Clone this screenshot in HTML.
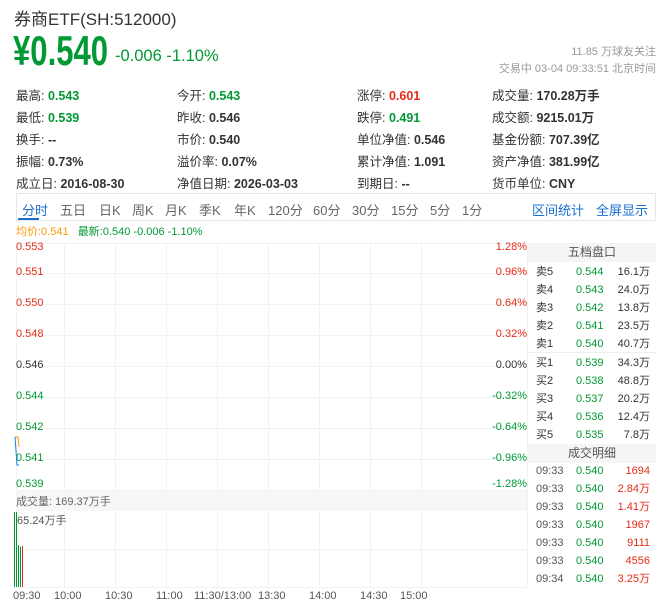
<!DOCTYPE html>
<html><head><meta charset="utf-8"><style>
*{margin:0;padding:0;box-sizing:border-box}
body{width:656px;height:615px;background:#fff;font-family:"Liberation Sans","Noto Sans CJK SC",sans-serif;color:#333;position:relative;overflow:hidden}
.a{position:absolute;white-space:nowrap}
.st{font-size:12.5px;color:#333}
.st b{font-weight:bold}
.tab{font-size:13px;color:#666;top:200px}
.ch{font-size:11px}
.hl{position:absolute;left:16px;width:511px;height:1px;background:#f2f2f2}
.vl{position:absolute;top:243px;width:1px;height:344px;background:#f2f2f2}
.pr{font-size:11px;color:#333}
.g{color:#093}.r{color:#e62c17}.o{color:#f90}
</style></head><body>
<div class="a" style="left:14px;top:5px;font-size:17px;color:#333">券商ETF(SH:512000)</div>
<div class="a g" style="left:13px;top:27px;font-size:42px;font-weight:bold;transform:scaleX(0.74);transform-origin:left top;line-height:1.15">¥0.540</div>
<div class="a g" style="left:115px;top:47px;font-size:16.5px">-0.006 -1.10%</div>
<div class="a" style="right:0;top:43px;font-size:11px;color:#999">11.85 万球友关注</div>
<div class="a" style="right:0;top:60px;font-size:11px;color:#999">交易中 03-04 09:33:51 北京时间</div>

<div class="a st" style="left:16px;top:85px">最高: <b class="g">0.543</b></div>
<div class="a st" style="left:177px;top:85px">今开: <b class="g">0.543</b></div>
<div class="a st" style="left:357px;top:85px">涨停: <b class="r">0.601</b></div>
<div class="a st" style="left:492px;top:85px">成交量: <b>170.28万手</b></div>
<div class="a st" style="left:16px;top:107px">最低: <b class="g">0.539</b></div>
<div class="a st" style="left:177px;top:107px">昨收: <b>0.546</b></div>
<div class="a st" style="left:357px;top:107px">跌停: <b class="g">0.491</b></div>
<div class="a st" style="left:492px;top:107px">成交额: <b>9215.01万</b></div>
<div class="a st" style="left:16px;top:129px">换手: <b>--</b></div>
<div class="a st" style="left:177px;top:129px">市价: <b>0.540</b></div>
<div class="a st" style="left:357px;top:129px">单位净值: <b>0.546</b></div>
<div class="a st" style="left:492px;top:129px">基金份额: <b>707.39亿</b></div>
<div class="a st" style="left:16px;top:151px">振幅: <b>0.73%</b></div>
<div class="a st" style="left:177px;top:151px">溢价率: <b>0.07%</b></div>
<div class="a st" style="left:357px;top:151px">累计净值: <b>1.091</b></div>
<div class="a st" style="left:492px;top:151px">资产净值: <b>381.99亿</b></div>
<div class="a st" style="left:16px;top:173px">成立日: <b>2016-08-30</b></div>
<div class="a st" style="left:177px;top:173px">净值日期: <b>2026-03-03</b></div>
<div class="a st" style="left:357px;top:173px">到期日: <b>--</b></div>
<div class="a st" style="left:492px;top:173px">货币单位: <b>CNY</b></div>

<div class="a" style="left:16px;top:193px;width:640px;height:28px;border:1px solid #e6e6e6"></div>
<div class="a tab" style="left:22px;color:#1a6fd1">分时</div>
<div class="a" style="left:18px;top:218px;width:21px;height:2px;background:#1a6fd1"></div>
<div class="a tab" style="left:60px">五日</div>
<div class="a tab" style="left:99px">日K</div>
<div class="a tab" style="left:132px">周K</div>
<div class="a tab" style="left:165px">月K</div>
<div class="a tab" style="left:199px">季K</div>
<div class="a tab" style="left:234px">年K</div>
<div class="a tab" style="left:268px">120分</div>
<div class="a tab" style="left:313px">60分</div>
<div class="a tab" style="left:352px">30分</div>
<div class="a tab" style="left:391px">15分</div>
<div class="a tab" style="left:430px">5分</div>
<div class="a tab" style="left:462px">1分</div>
<div class="a tab" style="left:532px;color:#1a6fd1">区间统计</div>
<div class="a tab" style="left:596px;color:#1a6fd1">全屏显示</div>

<div class="a" style="left:16px;top:223px;font-size:11px"><span class="o">均价:0.541</span>&nbsp;&nbsp;&nbsp;<span class="g">最新:0.540 -0.006 -1.10%</span></div>

<div class="hl" style="top:243px"></div><div class="hl" style="top:273px"></div><div class="hl" style="top:304px"></div><div class="hl" style="top:335px"></div><div class="hl" style="top:366px"></div><div class="hl" style="top:397px"></div><div class="hl" style="top:428px"></div><div class="hl" style="top:459px"></div><div class="hl" style="top:490px"></div><div class="hl" style="top:549px"></div><div class="hl" style="top:587px"></div>
<div class="vl" style="left:16px"></div><div class="vl" style="left:64px"></div><div class="vl" style="left:115px"></div><div class="vl" style="left:166px"></div><div class="vl" style="left:217px"></div><div class="vl" style="left:268px"></div><div class="vl" style="left:319px"></div><div class="vl" style="left:370px"></div><div class="vl" style="left:421px"></div><div class="vl" style="left:527px"></div>

<div class="a ch r" style="left:16px;top:241px">0.553</div><div class="a ch r" style="right:129px;top:241px">1.28%</div>
<div class="a ch r" style="left:16px;top:266px">0.551</div><div class="a ch r" style="right:129px;top:266px">0.96%</div>
<div class="a ch r" style="left:16px;top:297px">0.550</div><div class="a ch r" style="right:129px;top:297px">0.64%</div>
<div class="a ch r" style="left:16px;top:328px">0.548</div><div class="a ch r" style="right:129px;top:328px">0.32%</div>
<div class="a ch" style="left:16px;top:359px">0.546</div><div class="a ch" style="right:129px;top:359px">0.00%</div>
<div class="a ch g" style="left:16px;top:390px">0.544</div><div class="a ch g" style="right:129px;top:390px">-0.32%</div>
<div class="a ch g" style="left:16px;top:421px">0.542</div><div class="a ch g" style="right:129px;top:421px">-0.64%</div>
<div class="a ch g" style="left:16px;top:452px">0.541</div><div class="a ch g" style="right:129px;top:452px">-0.96%</div>
<div class="a ch g" style="left:16px;top:478px">0.539</div><div class="a ch g" style="right:129px;top:478px">-1.28%</div>
<svg class="a" style="left:14px;top:435px" width="8" height="32"><polyline points="1,2 4,2 5,12" fill="none" stroke="#f90" stroke-width="1"/><polyline points="1,2 3,30 5,30" fill="none" stroke="#1a7fe8" stroke-width="1"/></svg>

<div class="a" style="left:16px;top:491px;width:511px;height:20px;background:#f7f7f7"></div>
<div class="a" style="left:16px;top:493px;font-size:11px;color:#666">成交量: 169.37万手</div>
<div class="a" style="left:17px;top:512px;font-size:11px;color:#555">65.24万手</div>
<div class="a" style="left:14px;top:512px;width:1px;height:75px;background:#093"></div>
<div class="a" style="left:16px;top:512px;width:1px;height:75px;background:#093"></div>
<div class="a" style="left:18px;top:545px;width:1px;height:42px;background:#093"></div>
<div class="a" style="left:20px;top:547px;width:1px;height:40px;background:#093"></div>
<div class="a" style="left:22px;top:546px;width:1px;height:41px;background:#e62c17"></div>

<div class="a ch" style="left:13px;top:590px;color:#555">09:30</div>
<div class="a ch" style="left:54px;top:590px;color:#555">10:00</div>
<div class="a ch" style="left:105px;top:590px;color:#555">10:30</div>
<div class="a ch" style="left:156px;top:590px;color:#555">11:00</div>
<div class="a ch" style="left:194px;top:590px;color:#555">11:30/13:00</div>
<div class="a ch" style="left:258px;top:590px;color:#555">13:30</div>
<div class="a ch" style="left:309px;top:590px;color:#555">14:00</div>
<div class="a ch" style="left:360px;top:590px;color:#555">14:30</div>
<div class="a ch" style="left:400px;top:590px;color:#555">15:00</div>

<div class="a" style="left:528px;top:243px;width:128px;height:19px;background:#f5f5f5;text-align:center;font-size:12px;line-height:19px;color:#555">五档盘口</div>
<div class="a" style="left:528px;top:444px;width:128px;height:19px;background:#f5f5f5;text-align:center;font-size:12px;line-height:19px;color:#555">成交明细</div>
<div class="a" style="left:528px;top:352px;width:128px;height:1px;background:#eee"></div>

<div class="a pr" style="left:536px;top:263px;line-height:18px">卖5<br>卖4<br>卖3<br>卖2<br>卖1</div>
<div class="a pr g" style="left:576px;top:263px;line-height:18px">0.544<br>0.543<br>0.542<br>0.541<br>0.540</div>
<div class="a pr" style="right:6px;top:263px;line-height:18px;text-align:right">16.1万<br>24.0万<br>13.8万<br>23.5万<br>40.7万</div>
<div class="a pr" style="left:536px;top:354px;line-height:18px">买1<br>买2<br>买3<br>买4<br>买5</div>
<div class="a pr g" style="left:576px;top:354px;line-height:18px">0.539<br>0.538<br>0.537<br>0.536<br>0.535</div>
<div class="a pr" style="right:6px;top:354px;line-height:18px;text-align:right">34.3万<br>48.8万<br>20.2万<br>12.4万<br>7.8万</div>

<div class="a pr" style="left:536px;top:462px;line-height:18px;color:#555">09:33<br>09:33<br>09:33<br>09:33<br>09:33<br>09:33<br>09:34</div>
<div class="a pr g" style="left:576px;top:462px;line-height:18px">0.540<br>0.540<br>0.540<br>0.540<br>0.540<br>0.540<br>0.540</div>
<div class="a pr r" style="right:6px;top:462px;line-height:18px;text-align:right">1694<br>2.84万<br>1.41万<br>1967<br>9111<br>4556<br>3.25万</div>
</body></html>
